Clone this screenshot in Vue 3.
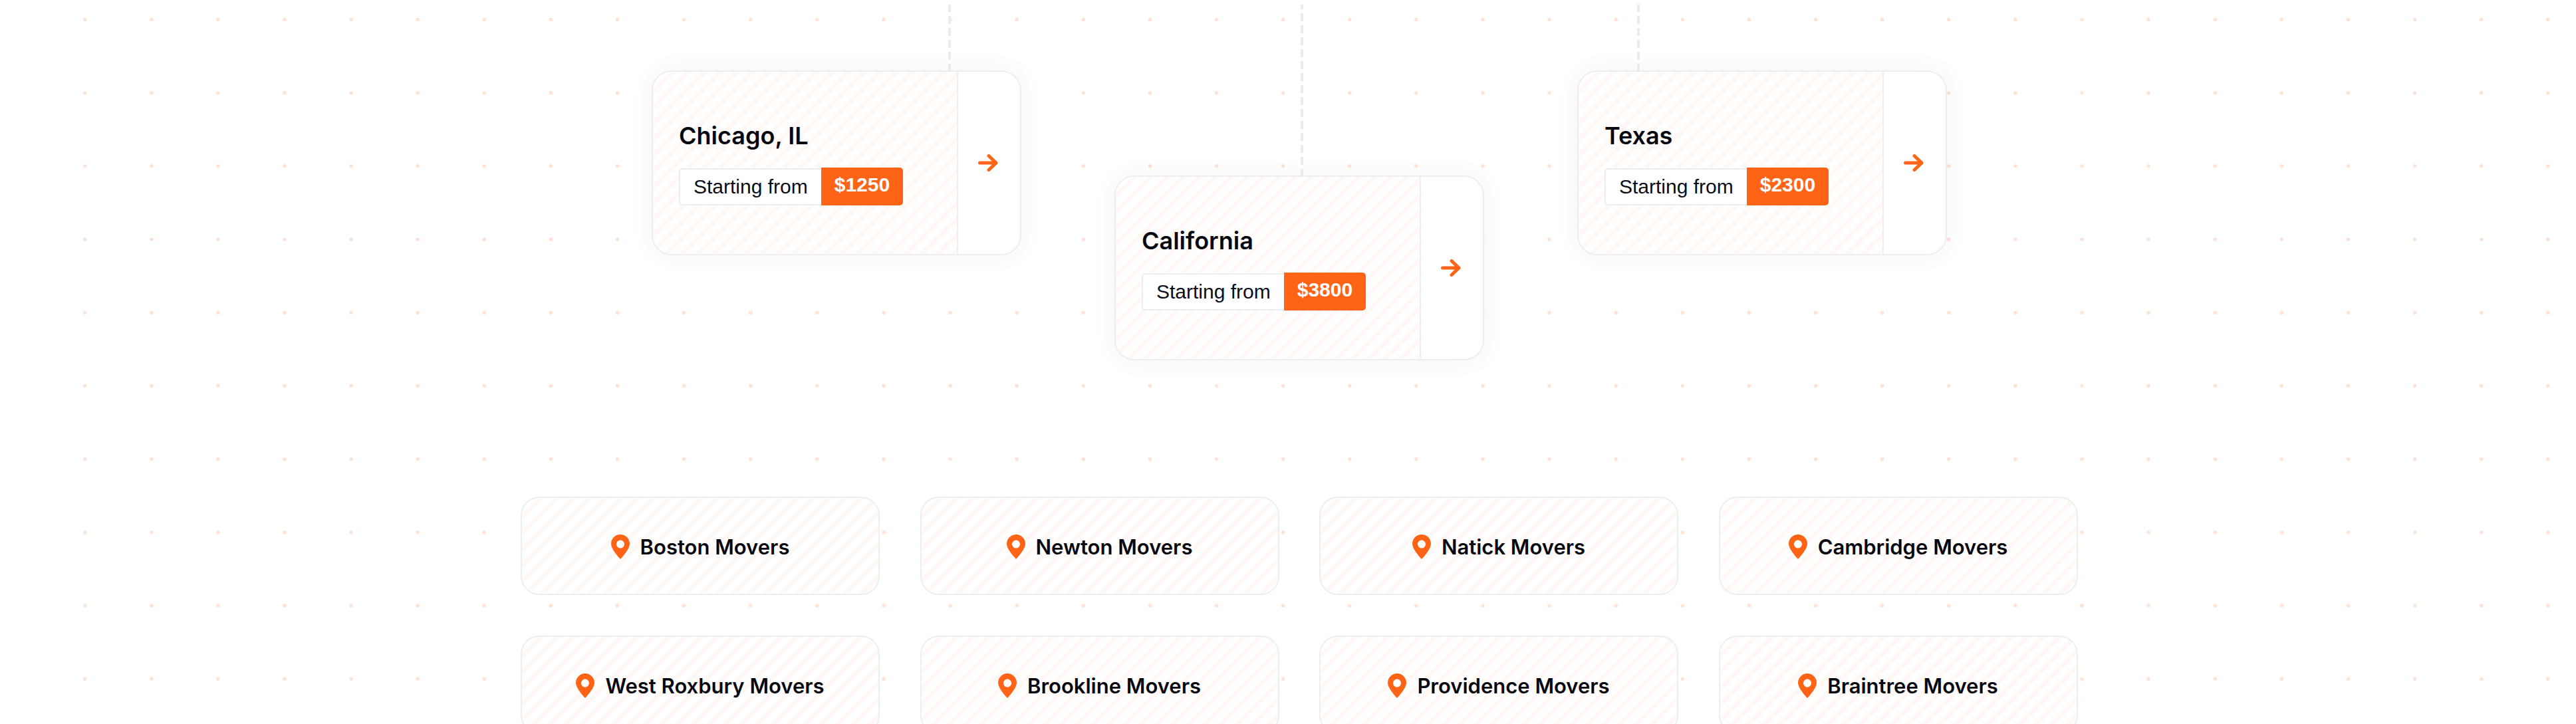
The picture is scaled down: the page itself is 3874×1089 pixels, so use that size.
<template>
  <div class="page">
    <div class="wrap">
      <div class="states">
        <div
          v-for="state in states"
          :key="state.name"
          class="state_card"
          :class="{ state_low: state.low }"
        >
          <span class="state_line" :style="{ left: state.line + 'px', top: -state.reach + 'px', height: state.reach + 'px' }"></span>
          <div class="state_body">
            <h3 class="state_name">{{ state.name }}</h3>
            <div class="state_price">
              <span class="price_label">Starting from</span>
              <span class="price_value">{{ state.price }}</span>
            </div>
          </div>
          <a class="state_go">
            <svg width="30" height="26" viewBox="0 0 30 26" fill="none" stroke="#ff6316" stroke-width="5" stroke-linecap="round" stroke-linejoin="round">
              <path d="M2.5 13H27M16 2.5L27 13L16 23.5" />
            </svg>
          </a>
        </div>
      </div>
      <div class="cities">
        <a v-for="city in cities" :key="city" class="city_card">
          <svg width="28" height="37" viewBox="0 0 28 37">
            <path
              fill="#ff6316"
              fill-rule="evenodd"
              d="M14 0C6.3 0 0 6.2 0 13.9C0 21.5 9.6 31.9 14 37C18.4 31.9 28 21.5 28 13.9C28 6.2 21.7 0 14 0ZM14 8.6C17.3 8.6 20 11.3 20 14.6C20 17.9 17.3 20.6 14 20.6C10.7 20.6 8 17.9 8 14.6C8 11.3 10.7 8.6 14 8.6Z"
            />
          </svg>
          <span>{{ city }}</span>
        </a>
      </div>
    </div>
  </div>
</template>

<script setup>
const states = [
  { name: 'Chicago, IL', price: '$1250', line: 444, reach: 101 },
  { name: 'California', price: '$3800', line: 278, reach: 259, low: true },
  { name: 'Texas', price: '$2300', line: 88, reach: 101 },
]

const cities = [
  'Boston Movers',
  'Newton Movers',
  'Natick Movers',
  'Cambridge Movers',
  'West Roxbury Movers',
  'Brookline Movers',
  'Providence Movers',
  'Braintree Movers',
]
</script>

<style scoped>
.page {
  position: relative;
  height: 1089px;
  overflow: hidden;
  background: #fff;
}
/* dotted backdrop, first column is almost gone */
.page::before {
  content: '';
  position: absolute;
  inset: 0;
  background-image: radial-gradient(circle at center, #fee2d4 0, #fee2d4 2.4px, transparent 3.2px);
  background-size: 100.12px 110.2px;
  background-position: -22.5px -25.6px;
  -webkit-mask-image: linear-gradient(90deg, rgba(0, 0, 0, 0.04) 60px, #000 61px);
  mask-image: linear-gradient(90deg, rgba(0, 0, 0, 0.04) 60px, #000 61px);
}
.wrap {
  position: relative;
  width: 2342px;
  margin-left: 783px;
  padding-top: 106px;
}

/* state cards */
.states {
  display: flex;
  justify-content: center;
  align-items: flex-start;
  gap: 140px;
}
.state_card {
  position: relative;
  display: flex;
  width: 556px;
  height: 278px;
  box-sizing: border-box;
  background: #fff;
  border: 2px solid #eceef0;
  border-radius: 30px;
  box-shadow: 0 0 36px rgba(20, 30, 40, 0.05);
}
.state_low {
  margin-top: 158px;
}
.state_line {
  position: absolute;
  width: 4px;
  background: repeating-linear-gradient(0deg, #e9ebee 0, #e9ebee 12px, transparent 12px, transparent 18px);
}
.state_body {
  flex: 1;
  display: flex;
  flex-direction: column;
  justify-content: center;
  align-items: flex-start;
  gap: 25px;
  padding: 0 0 0 39px;
  border-right: 2px solid #eceef0;
  border-radius: 28px 0 0 28px;
  background: repeating-linear-gradient(135deg, #fff8f5 0, #fff8f5 7px, #fff 7px, #fff 17px);
}
.state_name {
  margin: 0;
  font-family: Inter, sans-serif;
  font-size: 36px;
  font-weight: 600;
  line-height: 46px;
  color: #07070f;
}
.state_price {
  display: flex;
  align-items: stretch;
  font-family: 'Liberation Sans', Arial, sans-serif;
  font-size: 30px;
  line-height: 52px;
}
.price_label {
  padding: 0 20px;
  margin-top: 1px;
  background: #fff;
  color: #0c0c18;
  border: 2px solid #eceef0;
  border-right: none;
  border-radius: 5px 0 0 5px;
}
.price_value {
  padding: 0 20px 4px;
  background: #ff6316;
  color: #fff;
  font-weight: 700;
  border-radius: 0 5px 5px 0;
}
.state_go {
  width: 93px;
  flex: none;
  display: flex;
  align-items: center;
  justify-content: center;
  padding-right: 4px;
  box-sizing: border-box;
}

/* city links */
.cities {
  display: grid;
  grid-template-columns: repeat(4, 540px);
  gap: 61px 60.5px;
  margin-top: 205px;
}
.city_card {
  height: 148px;
  box-sizing: border-box;
  display: flex;
  align-items: center;
  justify-content: center;
  gap: 16px;
  padding-top: 3px;
  border: 2px solid #eceef0;
  border-radius: 28px;
  background: repeating-linear-gradient(135deg, #fff8f5 0, #fff8f5 7px, #fff 7px, #fff 17px);
  font-family: Inter, sans-serif;
  font-size: 31px;
  font-weight: 600;
  color: #07070f;
}
</style>
